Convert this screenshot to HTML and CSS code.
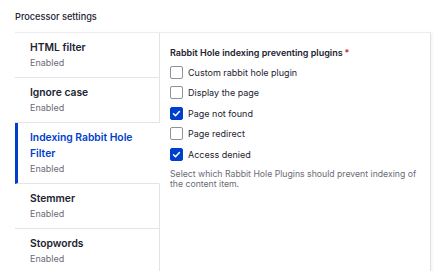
FILE: index.html
```html
<!DOCTYPE html>
<html lang="en">
<head>
  <meta charset="UTF-8" />
  <title>Processor settings</title>
  <link rel="stylesheet" href="styles.css">
</head>
<body>
  <div class="settings">
    <div class="settings-title">Processor settings</div>

    <div class="vertical-tabs">
      <!-- Tabs menu -->
      <ul class="tabs-menu">
        <li class="tab-item">
          <div class="tab-title">HTML filter</div>
          <div class="tab-summary">Enabled</div>
        </li>
        <li class="tab-item">
          <div class="tab-title">Ignore case</div>
          <div class="tab-summary">Enabled</div>
        </li>
        <li class="tab-item is-selected">
          <div class="tab-title">Indexing Rabbit Hole Filter</div>
          <div class="tab-summary">Enabled</div>
        </li>
        <li class="tab-item">
          <div class="tab-title">Stemmer</div>
          <div class="tab-summary">Enabled</div>
        </li>
        <li class="tab-item">
          <div class="tab-title">Stopwords</div>
          <div class="tab-summary">Enabled</div>
        </li>
      </ul>

      <!-- Pane -->
      <div class="tab-pane">
        <div class="field-label">Rabbit Hole indexing preventing plugins<span class="required">*</span></div>
        <div class="checkboxes">
          <label class="check-row"><span class="check"></span>Custom rabbit hole plugin</label>
          <label class="check-row"><span class="check"></span>Display the page</label>
          <label class="check-row"><span class="check is-checked"><svg viewBox="0 0 14 14" width="13" height="13"><path d="M3.2 7.3l2.5 2.5 5-5.4" fill="none" stroke="#fff" stroke-width="1.9" stroke-linecap="round" stroke-linejoin="round"/></svg></span>Page not found</label>
          <label class="check-row"><span class="check"></span>Page redirect</label>
          <label class="check-row"><span class="check is-checked"><svg viewBox="0 0 14 14" width="13" height="13"><path d="M3.2 7.3l2.5 2.5 5-5.4" fill="none" stroke="#fff" stroke-width="1.9" stroke-linecap="round" stroke-linejoin="round"/></svg></span>Access denied</label>
        </div>
        <div class="field-desc">Select which Rabbit Hole Plugins should prevent indexing of the content item.</div>
      </div>
    </div>
  </div>
</body>
</html>
```

FILE: styles.css
```css
body {
  font-family: Inter, 'Noto Sans', sans-serif;
  background-color: #fff;
  margin: 0;
  padding: 0;
  color: #222330;
}

.settings {
  padding: 10px 9px 0 15px;
}

.settings-title {
  font-size: 9.2px;
  font-weight: 500;
  line-height: 14px;
  height: 22px;
}

.vertical-tabs {
  display: flex;
  border-top: 1px solid #ececf0;
  border-right: 1px solid #e2e2e6;
  box-shadow: 1px 1px 3px rgba(0,0,0,0.06);
}

.tabs-menu {
  list-style: none;
  margin: 0;
  padding: 0;
  width: 145px;
  flex-shrink: 0;
}

.tab-item {
  padding: 6px 15px 7px 15px;
  border-bottom: 1px solid #e4e4e8;
  border-right: 1px solid #e4e4e8;
}

.tab-item.is-selected {
  padding-left: 12px;
  border-left: 3px solid #003ecc;
  border-right-color: transparent;
}

.tab-title {
  font-size: 10.3px;
  font-weight: 600;
  line-height: 16px;
}

.is-selected .tab-title {
  color: #003ecc;
}

.tab-summary {
  font-size: 9px;
  line-height: 15px;
  color: #6b6c75;
}

.tab-pane {
  flex: 1;
  padding: 13px 10px 0 10px;
  min-height: 240px;
}

.field-label {
  font-size: 9px;
  font-weight: 600;
  line-height: 14px;
  margin-bottom: 2px;
}

.required {
  color: #d72222;
  margin-left: 2px;
}

.check-row {
  display: flex;
  align-items: center;
  gap: 5px;
  height: 20.5px;
  font-size: 9px;
  color: #222330;
}

.check {
  width: 11px;
  height: 11px;
  border: 1px solid #8e929c;
  border-radius: 2px;
  background: #fff;
  display: flex;
  align-items: center;
  justify-content: center;
}

.check.is-checked {
  background-color: #003ecc;
  border-color: #003ecc;
}

.field-desc {
  margin-top: 4px;
  font-size: 8.7px;
  line-height: 10px;
  color: #6b6c75;
}
```
